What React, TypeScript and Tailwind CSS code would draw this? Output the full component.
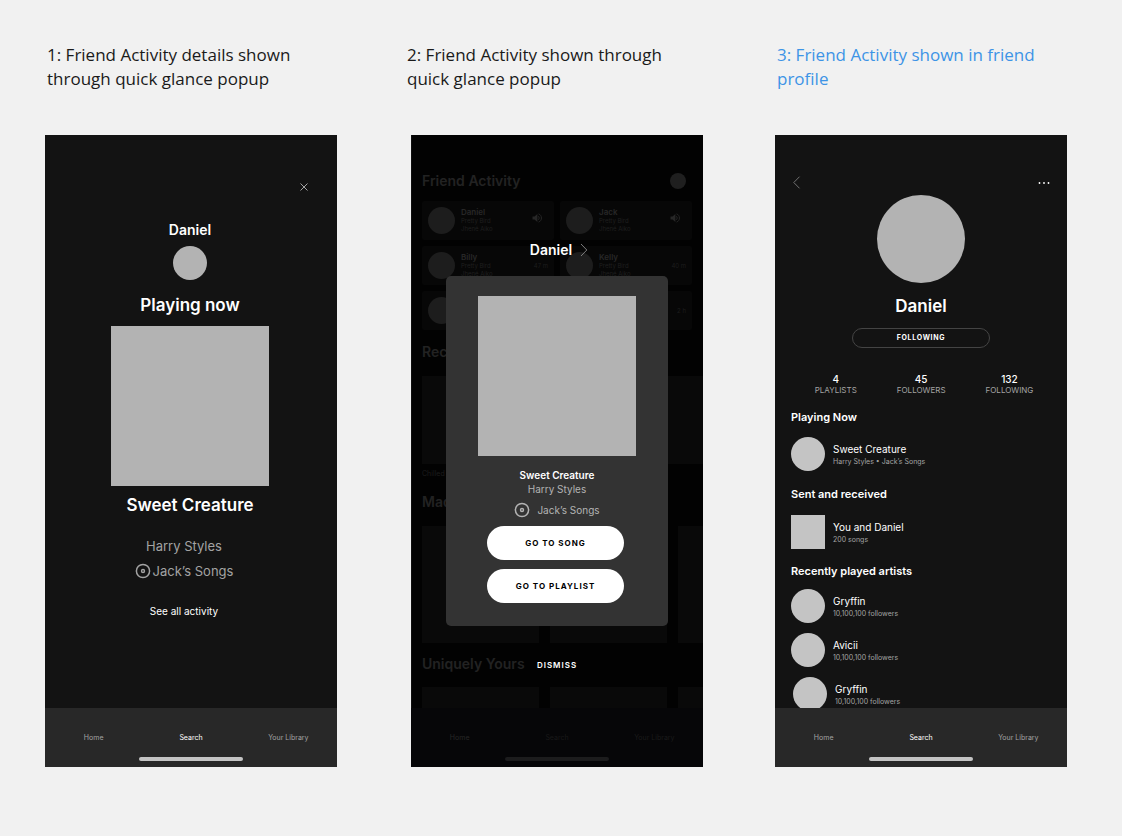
import React from "react";

function DiscIcon({ className }: { className?: string }) {
  return (
    <svg viewBox="0 0 16 16" fill="none" stroke="currentColor" aria-hidden="true" className={className}>
      <circle cx="8" cy="8" r="6.600" strokeWidth="1.500" />
      <circle cx="8" cy="8" r="1.500" strokeWidth="1.400" />
    </svg>
  );
}

function SpeakerIcon() {
  return (
    <svg viewBox="0 0 10 10" fill="none" className="size-[10px] text-[#272727]" aria-hidden="true">
      <path d="M0.5 3.4h2L5.4 0.9v8.2L2.5 6.6h-2z" fill="currentColor" />
      <path d="M6.4 3.2c1 1 1 2.600 0 3.600M6.600 0.900c3.800 1.400 3.800 6.800 0 8.200" stroke="currentColor" strokeWidth="1" />
    </svg>
  );
}

function NavBar({ dim = false }: { dim?: boolean }) {
  const bar = dim ? "bg-[#060608]" : "bg-[#282828]";
  const home = dim ? "text-[#262627]" : "text-[#a3a3a3]";
  const search = dim ? "text-[#191919]" : "text-white";
  const library = dim ? "text-[#1b1b1b]" : "text-[#a3a3a3]";
  const grip = dim ? "bg-[#1c1c1d]" : "bg-[#c4c4c4]";
  return (
    <nav className={`flex flex-col items-center pt-6 pb-[6px] ${bar}`}>
      <div className="grid w-full grid-cols-3 text-center text-[7px] leading-[12px]">
        <a href="#home" className={home}>Home</a>
        <a href="#search" className={search}>Search</a>
        <a href="#library" className={library}>Your Library</a>
      </div>
      <div className={`mt-[13px] h-1 w-[104px] rounded-full ${grip}`} />
    </nav>
  );
}

function Column({ caption, className = "", captionClass, children }: {
  caption: string;
  className?: string;
  captionClass: string;
  children: React.ReactNode;
}) {
  return (
    <section className={`min-w-0 flex-1 ${className}`}>
      <h2 className={`mb-11 font-['Open_Sans',sans-serif] text-[17px] leading-6 ${captionClass}`}>{caption}</h2>
      {children}
    </section>
  );
}

function NowPlayingScreen() {
  return (
    <div className="bg-[#131313] text-white">
      <div className="flex h-[573px] flex-col items-center">
        <button aria-label="Close" className="mt-12 mr-[29px] self-end">
          <svg viewBox="0 0 8 8" className="size-2 stroke-[#b3b3b3]" strokeWidth="0.9" aria-hidden="true">
            <path d="M0.500 0.500l7 7M7.500 0.500l-7 7" />
          </svg>
        </button>
        <h3 className="mt-[29px] mr-[2px] text-[14px] leading-5 font-semibold">Daniel</h3>
        <div className="mt-[6px] mr-[2px] size-[34px] rounded-full bg-[#b3b3b3]" />
        <p className="mt-[13px] mr-[2px] text-[17px] leading-6 font-semibold">Playing now</p>
        <div className="mt-[9px] mr-[2px] h-40 w-[158px] bg-[#b3b3b3]" />
        <p className="mt-[7px] mr-[2px] text-[17px] leading-6 font-semibold">Sweet Creature</p>
        <p className="mt-[19px] mr-[14px] text-[13px] leading-5 text-[#a3a3a3]">Harry Styles</p>
        <p className="mt-[5px] mr-[14px] flex items-center gap-[2px] text-[13px] leading-5 text-[#a3a3a3]">
          <DiscIcon className="size-4" />
          Jack’s Songs
        </p>
        <a href="#activity" className="mt-[22px] mr-[14px] text-[10px] leading-4">See all activity</a>
      </div>
      <NavBar />
    </div>
  );
}

const friends = [
  { name: "Daniel", status: "playing" },
  { name: "Jack", status: "playing" },
  { name: "Billy", status: "47 m" },
  { name: "Kelly", status: "40 m" },
  { name: "Sam", status: "1 h" },
  { name: "Alex", status: "2 h" },
];

function FriendCard({ name, status }: { name: string; status: string }) {
  return (
    <li className="flex h-[39px] items-center rounded-[2px] bg-[#070707] pr-[6px] pl-[6px]">
      <div className="size-[27px] shrink-0 rounded-full bg-[#1d1d1d]" />
      <div className="ml-[6px] flex-1 text-[6px] leading-2 text-[#1f1f1f]">
        <p className="text-[8px] leading-[9px] font-semibold text-[#272727]">{name}</p>
        <p>Pretty Bird</p>
        <p>Jhené Aiko</p>
      </div>
      {status === "playing" ? (
        <div className="mr-[6px] mb-[6px]"><SpeakerIcon /></div>
      ) : (
        <p className="text-[6px] text-[#1d1d1d]">{status}</p>
      )}
    </li>
  );
}

function Tiles({ className }: { className: string }) {
  return (
    <div className="mr-[-11px] flex gap-[11px] overflow-hidden">
      <div className={`w-[117px] shrink-0 bg-[#090909] ${className}`} />
      <div className={`w-[117px] shrink-0 bg-[#090909] ${className}`} />
      <div className={`w-[117px] shrink-0 bg-[#090909] ${className}`} />
    </div>
  );
}

function PopupScreen() {
  return (
    <div className="relative bg-[#020202]">
      <div aria-hidden="true" className="h-[573px] overflow-hidden border-l border-[#101010] pr-[11px] pl-[10px] pt-[34px] text-[#222]">
        <div className="flex items-center justify-between pr-[6px]">
          <h3 className="text-[14px] leading-6 font-semibold">Friend Activity</h3>
          <div className="size-4 rounded-full bg-[#1f1f1f]" />
        </div>
        <ul className="mt-2 grid grid-cols-2 gap-x-[6px] gap-y-[6px]">
          {friends.map((friend) => <FriendCard key={friend.name} {...friend} />)}
        </ul>
        <h3 className="mt-[10px] mb-[12px] text-[14px] leading-6 font-semibold">Recently Played</h3>
        <div className="mr-[-11px] h-[88px] bg-[#090909]" />
        <p className="mt-[5px] text-[7px] leading-[10px] text-[#1d1d1d]">Chilled Hits</p>
        <h3 className="mt-[11px] mb-[12px] text-[14px] leading-6 font-semibold">Made For You</h3>
        <Tiles className="h-[117px]" />
        <h3 className="mt-[9px] mb-[11px] text-[14px] leading-6 font-semibold">Uniquely Yours</h3>
        <Tiles className="h-[60px]" />
      </div>
      <NavBar dim />
      <div role="dialog" aria-label="Daniel's activity" className="absolute inset-0 flex flex-col items-center pt-[105px] text-white">
        <a href="#daniel" className="ml-1 flex items-center gap-2 text-[14px] leading-5 font-semibold">
          Daniel
          <svg viewBox="0 0 8 14" fill="none" className="h-[14px] w-2 stroke-[#8a8a8a]" strokeWidth="0.9" aria-hidden="true">
            <path d="M1 1l5.800 6L1 13" />
          </svg>
        </a>
        <div className="mt-4 flex w-[222px] flex-col items-center rounded-[5px] bg-[#333] pt-5 pb-[23px]">
          <div className="h-40 w-[158px] bg-[#b3b3b3]" />
          <p className="mt-3 text-[10px] leading-[14px] font-semibold">Sweet Creature</p>
          <p className="text-[10px] leading-[14px] text-[#b3b3b3]">Harry Styles</p>
          <p className="mt-[6px] flex items-center gap-[7px] text-[10px] leading-4 text-[#b3b3b3]">
            <DiscIcon className="size-4" />
            Jack’s Songs
          </p>
          <button className="mt-2 mr-[3px] h-[34px] w-[137px] rounded-full bg-white text-[8px] font-bold tracking-[1px] text-black">GO TO SONG</button>
          <button className="mt-[9px] mr-[3px] h-[34px] w-[137px] rounded-full bg-white text-[8px] font-bold tracking-[1px] text-black">GO TO PLAYLIST</button>
        </div>
        <button className="mt-[31px] text-[8px] leading-4 font-semibold tracking-[1px]">DISMISS</button>
      </div>
    </div>
  );
}

function Stat({ value, label }: { value: string; label: string }) {
  return (
    <li>
      <p className="text-[10px] leading-[11px] font-medium">{value}</p>
      <p className="text-[8px] leading-[10px] text-[#a3a3a3]">{label}</p>
    </li>
  );
}

function Row({ title, detail, square = false, className = "" }: {
  title: string;
  detail: string;
  square?: boolean;
  className?: string;
}) {
  return (
    <div className={`flex items-center gap-2 ${className}`}>
      <div className={`size-[34px] shrink-0 bg-[#c4c4c4] ${square ? "" : "rounded-full"}`} />
      <div className="pt-px">
        <p className="text-[10px] leading-[14px]">{title}</p>
        <p className="text-[7px] leading-[12px] text-[#a3a3a3]">{detail}</p>
      </div>
    </div>
  );
}

function ProfileScreen() {
  return (
    <div className="bg-[#131313] text-white">
      <div className="flex h-[573px] flex-col overflow-hidden px-4 pt-[41px]">
        <div className="flex items-center justify-between pr-px pl-[2px]">
          <button aria-label="Back">
            <svg viewBox="0 0 8 13" fill="none" className="h-[13px] w-2 stroke-[#8a8a8a]" strokeWidth="0.8" aria-hidden="true">
              <path d="M6.500 0.700L0.800 6.500l5.700 5.800" />
            </svg>
          </button>
          <button aria-label="More options">
            <svg viewBox="0 0 12 3" className="h-[3px] w-3 fill-white" aria-hidden="true">
              <circle cx="1.500" cy="2" r="0.900" />
              <circle cx="6" cy="2" r="0.900" />
              <circle cx="10.500" cy="2" r="0.900" />
            </svg>
          </button>
        </div>
        <div className="mt-[6px] size-[88px] shrink-0 self-center rounded-full bg-[#b3b3b3]" />
        <h3 className="mt-[11px] text-center text-[17px] leading-6 font-semibold">Daniel</h3>
        <button className="mt-[10px] h-5 w-[138px] shrink-0 self-center rounded-full border border-[#444] text-[7px] font-bold tracking-widest">FOLLOWING</button>
        <ul className="mt-[26px] flex justify-center gap-10 pl-[6px] text-center">
          <Stat value="4" label="PLAYLISTS" />
          <Stat value="45" label="FOLLOWERS" />
          <Stat value="132" label="FOLLOWING" />
        </ul>
        <h4 className="mt-[14px] text-[11px] leading-4 font-semibold">Playing Now</h4>
        <Row title="Sweet Creature" detail="Harry Styles • Jack’s Songs" className="mt-3" />
        <h4 className="mt-[15px] text-[11px] leading-4 font-semibold">Sent and received</h4>
        <Row title="You and Daniel" detail="200 songs" square className="mt-[13px]" />
        <h4 className="mt-[14px] text-[11px] leading-4 font-semibold">Recently played artists</h4>
        <Row title="Gryffin" detail="10,100,100 followers" className="mt-[10px]" />
        <Row title="Avicii" detail="10,100,100 followers" className="mt-[10px]" />
        <Row title="Gryffin" detail="10,100,100 followers" className="mt-[10px] pl-[2px]" />
      </div>
      <NavBar />
    </div>
  );
}

export default function App() {
  return (
    <main className="flex min-h-screen bg-[#f1f1f1] pt-[43px] pr-[55px] pb-[69px] pl-[45px] font-[Inter,sans-serif]">
      <Column caption="1: Friend Activity details shown through quick glance popup" captionClass="pl-[2px] text-[#1a1a1a]">
        <NowPlayingScreen />
      </Column>
      <Column caption="2: Friend Activity shown through quick glance popup" className="ml-[74px]" captionClass="-ml-1 text-[#1a1a1a]">
        <PopupScreen />
      </Column>
      <Column caption="3: Friend Activity shown in friend profile" className="ml-[72px]" captionClass="pl-[2px] text-[#3d94e6]">
        <ProfileScreen />
      </Column>
    </main>
  );
}
